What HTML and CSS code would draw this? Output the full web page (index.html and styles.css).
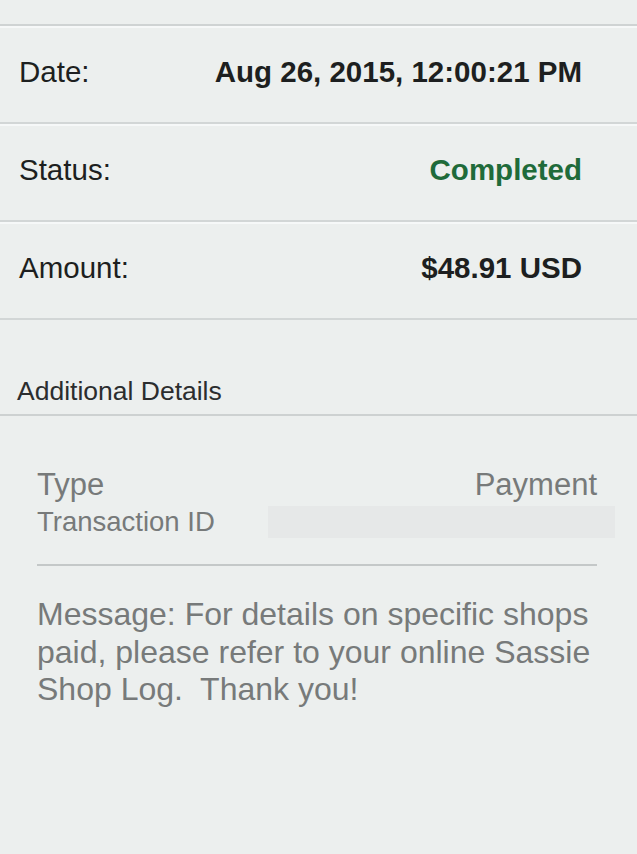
FILE: index.html
```html
<!DOCTYPE html>
<html>
<head>
<meta charset="utf-8">
<link rel="stylesheet" href="styles.css">
</head>
<body>
<div class="page">
  <div class="top"></div>
  <div class="row">
    <span class="label">Date:</span>
    <span class="value">Aug 26, 2015, 12:00:21 PM</span>
  </div>
  <div class="row">
    <span class="label">Status:</span>
    <span class="value green">Completed</span>
  </div>
  <div class="row">
    <span class="label">Amount:</span>
    <span class="value">$48.91 USD</span>
  </div>
  <div class="section-head">Additional Details</div>
  <div class="details">
    <div class="drow">
      <span class="dlabel">Type</span>
      <span class="dvalue">Payment</span>
    </div>
    <div class="trow">
      <span class="tlabel">Transaction ID</span>
      <span class="redacted"></span>
    </div>
    <div class="divider"></div>
    <p class="message">Message: For details on specific shops paid, please refer to your online Sassie Shop Log.&nbsp; Thank you!</p>
  </div>
</div>
</body>
</html>
```

FILE: styles.css
```css
html, body {
  margin: 0;
  padding: 0;
  background: #ecefee;
}
.page {
  width: 637px;
  height: 854px;
  font-family: "Liberation Sans", Arial, sans-serif;
  background: #ecefee;
  overflow: hidden;
}
.top {
  height: 24px;
  border-bottom: 2px solid #cfd3d3;
}
.row {
  display: flex;
  align-items: center;
  justify-content: space-between;
  padding: 0 55px 4px 19px;
  box-sizing: border-box;
  height: 98px;
  border-bottom: 2px solid #d2d6d6;
  box-shadow: inset 0 2px 0 #f6f8f8;
}
.label {
  font-size: 29.5px;
  color: #1d1f20;
}
.value {
  font-size: 29.5px;
  font-weight: bold;
  color: #1d1f20;
}
.green {
  color: #1f6b3a;
}
.section-head {
  height: 96px;
  display: flex;
  align-items: flex-end;
  padding: 0 0 7px 17px;
  box-sizing: border-box;
  font-size: 26.5px;
  color: #2b2d2e;
  border-bottom: 2px solid #cdd1d1;
}
.details {
  padding: 52px 40px 0 37px;
}
.drow {
  display: flex;
  justify-content: space-between;
  font-size: 31px;
  color: #777a7a;
  line-height: 34px;
}
.trow {
  display: flex;
  align-items: center;
  margin-top: 4px;
  height: 32px;
}
.tlabel {
  font-size: 27.5px;
  color: #777a7a;
  width: 231px;
  flex-shrink: 0;
}
.redacted {
  width: 347px;
  height: 32px;
  flex-shrink: 0;
  background: #e6e8e8;
}
.divider {
  margin-top: 26px;
  width: 560px;
  height: 2px;
  background: #c4c8c8;
}
.message {
  margin: 30px 0 0 0;
  width: 570px;
  font-size: 32px;
  line-height: 37.5px;
  color: #777a7a;
}
```
